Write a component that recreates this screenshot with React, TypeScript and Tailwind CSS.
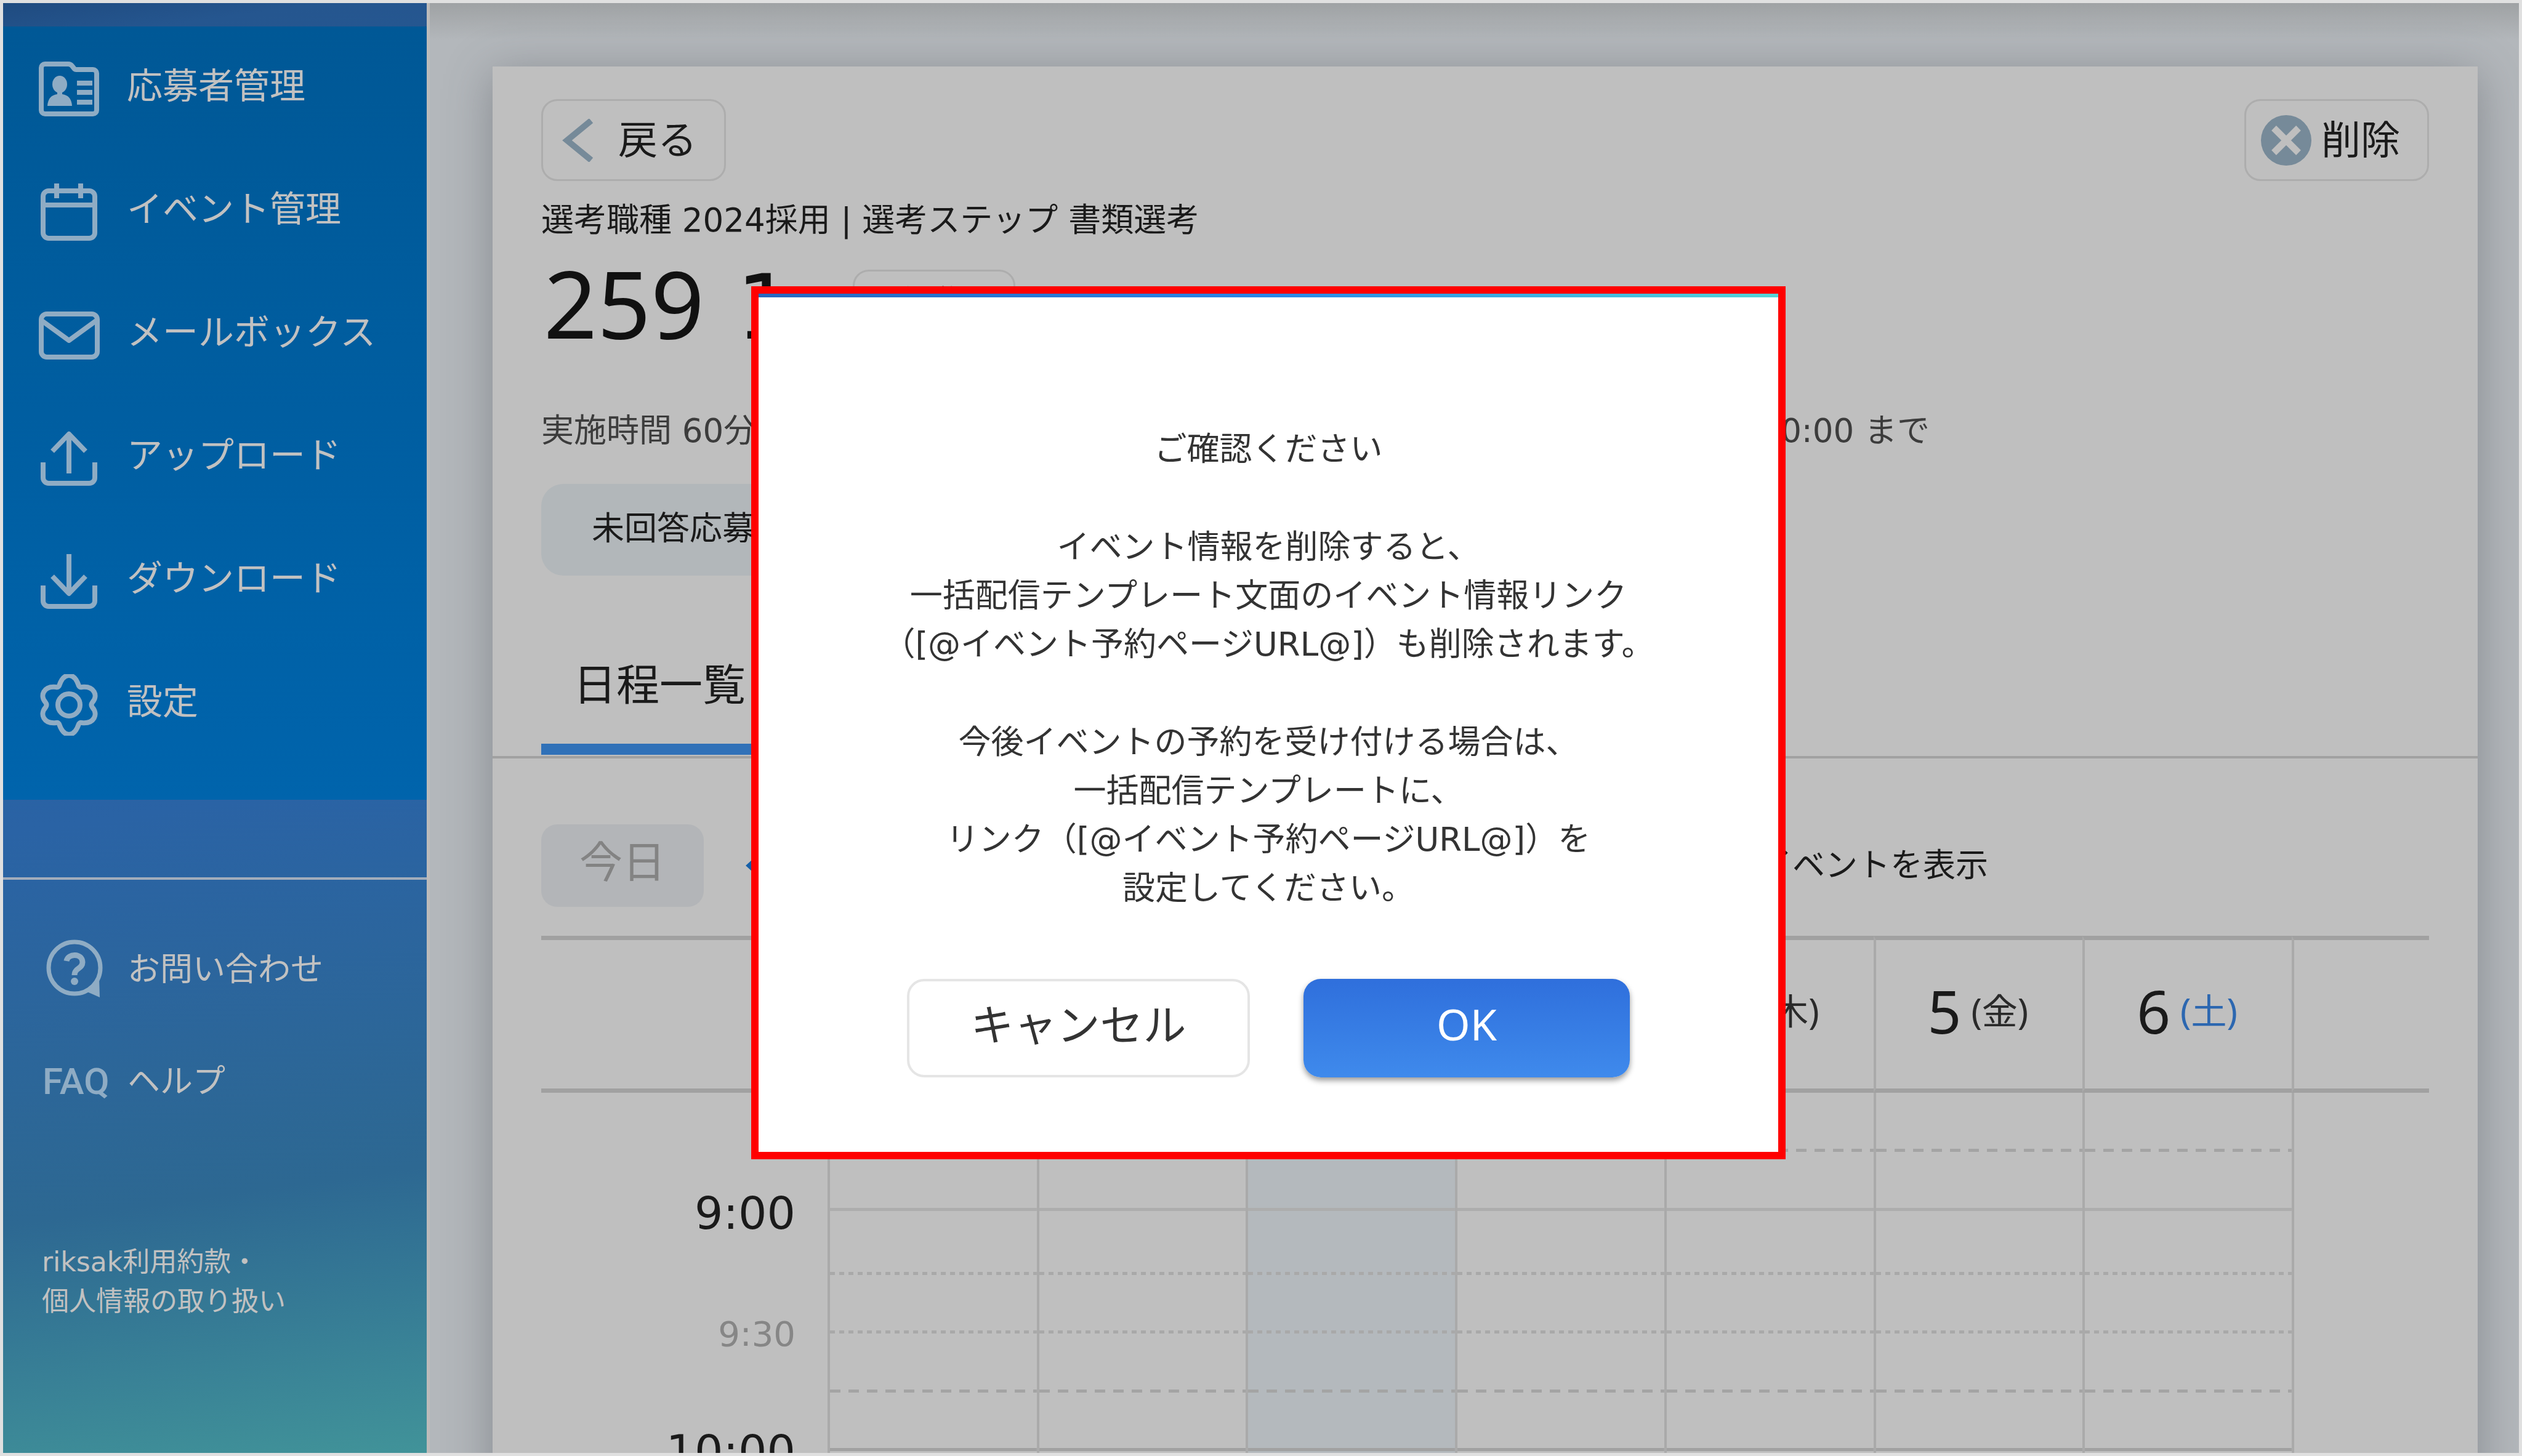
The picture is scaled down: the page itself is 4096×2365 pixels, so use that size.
import type React from "react";
import { clsx } from "clsx";

interface NavItem {
	label: string;
	icon: React.ReactNode;
}

interface Day {
	date: number;
	week: string;
	today?: boolean;
	saturday?: boolean;
}

interface Slot {
	height: string;
	line: string;
	time?: string;
	half?: boolean;
}

const ApplicantIcon = () => (
	<>
		<path d="M5 15a6 6 0 0 1 6-6h38a8 8 0 0 1 6 3l4 5a4 4 0 0 0 3 1h27a6 6 0 0 1 6 6v60a6 6 0 0 1-6 6H11a6 6 0 0 1-6-6z" />
		<path d="M63 40h25M63 55h25M63 71h25" />
		<g fill="currentColor" stroke="none">
			<ellipse cx="35" cy="42" rx="12" ry="14" />
			<path d="M31 52h8v6q15 2 16 19H15q1-17 16-19z" />
		</g>
	</>
);

const CalendarIcon = () => (
	<>
		<rect x="8" y="15" width="84" height="77" rx="9" />
		<path d="M8 38h84M30 3v24M69 3v24" />
	</>
);

const MailIcon = () => (
	<>
		<rect x="5" y="15" width="91" height="70" rx="9" />
		<path d="M6 26l44 32 44-32" />
	</>
);

const UploadIcon = () => (
	<>
		<path d="M8 56v25a9 9 0 0 0 9 9h66a9 9 0 0 0 9-9V56" />
		<path d="M50 74V12M23 38l27-28 27 28" />
	</>
);

const DownloadIcon = () => (
	<>
		<path d="M8 56v25a9 9 0 0 0 9 9h66a9 9 0 0 0 9-9V56" />
		<path d="M50 5v62M23 41l27 28 27-28" />
	</>
);

const GearIcon = () => (
	<>
		<circle cx="50" cy="50" r="18" />
		<path d="M34 19C38 7 43 2 50 2s12 5 16 17q2 3 5 2c20-2 27 14 17 25q-3 4 0 8c10 11 3 27-17 25q-3-1-5 2C62 93 57 98 50 98s-12-5-16-17q-2-3-5-2C9 81 2 65 12 54q3-4 0-8C2 35 9 19 29 21q3 1 5-2z" />
	</>
);

const NAV_ITEMS: NavItem[] = [
	{ label: "応募者管理", icon: <ApplicantIcon /> },
	{ label: "イベント管理", icon: <CalendarIcon /> },
	{ label: "メールボックス", icon: <MailIcon /> },
	{ label: "アップロード", icon: <UploadIcon /> },
	{ label: "ダウンロード", icon: <DownloadIcon /> },
	{ label: "設定", icon: <GearIcon /> },
];

const DAYS: Day[] = [
	{ date: 31, week: "日" },
	{ date: 1, week: "月" },
	{ date: 2, week: "火", today: true },
	{ date: 3, week: "水" },
	{ date: 4, week: "木" },
	{ date: 5, week: "金" },
	{ date: 6, week: "土", saturday: true },
];

const SOLID = "bg-[linear-gradient(#adadad,#adadad)]";
const HOUR = "bg-[linear-gradient(#a1a1a1,#a1a1a1)]";
const DOTTED =
	"bg-[repeating-linear-gradient(90deg,#a9a9a9_0_8px,transparent_8px_15px)]";
const DASHED =
	"bg-[repeating-linear-gradient(90deg,#a4a4a4_0_17px,transparent_17px_30px)]";

const SLOTS: Slot[] = [
	{ height: "h-[96px]", line: DASHED },
	{ height: "h-[96px]", line: SOLID, time: "9:00" },
	{ height: "h-[104px]", line: DOTTED },
	{ height: "h-[95px]", line: DOTTED, time: "9:30", half: true },
	{ height: "h-[96px]", line: DASHED },
	{ height: "h-[95px]", line: HOUR, time: "10:00" },
	{ height: "h-[96px]", line: DOTTED },
];

const Sidebar: React.FC = () => (
	<aside className="flex w-[693px] shrink-0 flex-col border-r-[5px] border-[#bdbbba] bg-[linear-gradient(172deg,#1f4b80_0%,#25568f_3%,#2a63a5_55%,#2d6892_81%,#419399_100%)] text-[#c1c1c1]">
		<nav className="mt-[38px] bg-linear-to-b from-[#005896] to-[#0064ac] pt-[2px] pb-[54px]">
			{NAV_ITEMS.map((item) => (
				<a
					key={item.label}
					href="#"
					className="flex h-[200px] items-center pl-[57px] text-[58px] leading-[80px]"
				>
					<svg
						viewBox="0 0 100 100"
						className="mr-11 size-[100px] text-[#8facc4]"
						fill="none"
						stroke="currentColor"
						strokeWidth="8"
						strokeLinecap="butt"
						strokeLinejoin="round"
					>
						{item.icon}
					</svg>
					<span className="pb-[10px]">{item.label}</span>
				</a>
			))}
		</nav>

		<div className="mt-[126px] border-t-4 border-[#a3adbb] pt-[55px] text-[53px] leading-[72px]">
			<a href="#" className="flex h-[182px] items-center pl-[66px]">
				<svg
					viewBox="0 0 100 100"
					className="mr-9 size-[100px] text-[#8facc4]"
					fill="none"
					stroke="currentColor"
					strokeWidth="7"
				>
					<circle cx="50" cy="47" r="42" />
					<path d="M66 84l24-20 1 31z" fill="currentColor" stroke="none" />
					<path d="M37 36c2-13 26-13 26 2 0 11-13 9-13 21" strokeWidth="9" />
					<circle cx="50" cy="69" r="6" fill="currentColor" stroke="none" />
				</svg>
				お問い合わせ
			</a>
			<a href="#" className="flex h-[182px] items-center pl-16">
				<span className="w-[138px] font-['Roboto',sans-serif] text-[60px] font-medium text-[#8facc4]">
					FAQ
				</span>
				ヘルプ
			</a>
			<a
				href="#"
				className="mt-[170px] block pl-[63px] text-[44px] leading-[64px]"
			>
				riksak利用約款・
				<br />
				個人情報の取り扱い
			</a>
		</div>
	</aside>
);

const WeekTable: React.FC = () => (
	<table className="mt-[47px] w-full table-fixed border-separate border-spacing-0">
		<colgroup>
			<col className="w-[465px]" />
			{DAYS.map((day) => (
				<col key={day.date} className="w-[11.08%]" />
			))}
			<col />
		</colgroup>
		<thead>
			<tr className="h-[255px]">
				<th className="border-y-7 border-[#a1a1a1]" />
				{DAYS.map((day) => (
					<th
						key={day.date}
						className={clsx(
							"border-y-7 border-l-4 border-y-[#a1a1a1] border-l-[#aaaaaa] font-normal",
							day.today && "bg-[#b4b9bd]",
						)}
					>
						<div className="flex items-center justify-center gap-4 pr-1 pb-3 font-['Noto_Sans','Noto_Sans_CJK_JP',sans-serif] leading-[120px]">
							<span className="text-[96px]">{day.date}</span>
							<span
								className={clsx(
									"text-[58px]",
									day.saturday ? "text-[#2c67b0]" : "text-[#2a2a2a]",
								)}
							>
								({day.week})
							</span>
						</div>
					</th>
				))}
				<th className="border-y-7 border-l-4 border-y-[#a1a1a1] border-l-[#aaaaaa]" />
			</tr>
		</thead>
		<tbody>
			{SLOTS.map((slot, index) => (
				<tr key={index} className={slot.height}>
					{index === 0 && <td />}
					{slot.time && (
						<td
							rowSpan={2}
							className={clsx(
								"pr-[52px] text-right align-middle leading-[90px]",
								slot.half ? "text-[56px] text-[#868686]" : "text-[73px]",
							)}
						>
							{slot.time}
						</td>
					)}
					{DAYS.map((day) => (
						<td
							key={day.date}
							className={clsx(
								"border-l-4 border-[#aaaaaa] bg-bottom bg-no-repeat bg-size-[100%_5px]",
								slot.line,
								day.today && "bg-[#b4b9bd]",
							)}
						/>
					))}
					<td className="border-l-4 border-[#aaaaaa]" />
				</tr>
			))}
		</tbody>
	</table>
);

const EventCard: React.FC = () => (
	<section className="mr-[67px] ml-[102px] mt-[103px] bg-[#bfbfbf] pt-[53px] text-[53px] leading-[80px] text-[#1a1a1a] shadow-[0_12px_70px_rgba(80,85,90,0.45)]">
		<div className="px-[79px]">
			<div className="flex justify-between text-[64px]">
				<button className="flex h-[133px] w-[300px] items-center rounded-[26px] border-3 border-[#adadad] pl-[30px]">
					<svg
						viewBox="0 0 52 70"
						className="mr-10 h-[70px] w-[52px]"
						fill="none"
						stroke="#768a99"
						strokeWidth="10"
					>
						<path d="M48 3L9 35l39 32" />
					</svg>
					戻る
				</button>
				<button className="flex h-[133px] w-[300px] items-center rounded-[26px] border-3 border-[#adadad] pl-6">
					<svg viewBox="0 0 82 82" className="mr-4 size-[82px]">
						<circle cx="41" cy="41" r="41" fill="#768a99" />
						<path
							d="M21 21l40 40M61 21L21 61"
							stroke="#bfbfbf"
							strokeWidth="11"
						/>
					</svg>
					削除
				</button>
			</div>

			<p className="mt-6">選考職種 2024採用 | 選考ステップ 書類選考</p>
			<div className="mt-[19px] flex items-center pl-1">
				<h1 className="font-['Noto_Sans',sans-serif] text-[152px] leading-[150px] text-[#111111]">
					259
					<span className="ml-[52px] font-['DejaVu_Sans',sans-serif] text-[146px] leading-[100px]">
						1
					</span>
				</h1>
				<button className="ml-24 h-[108px] w-[264px] rounded-[26px] border-3 border-[#adadad]">
					編集
				</button>
			</div>

			<div className="mt-[93px] flex text-[#3c3c3c]">
				<span>実施時間 60分</span>
				<span className="ml-auto mr-[811px]">00:00 まで</span>
			</div>
			<div className="mt-[46px] flex">
				<span className="flex h-[149px] items-center rounded-[36px] bg-[#b2b7ba] px-[82px] pb-1">
					未回答応募者
				</span>
			</div>
		</div>

		<div className="mt-[139px] flex border-b-4 border-[#a1a1a1] px-[79px] pb-[2px] text-[70px]">
			<button className="border-b-18 border-[#3071b8] px-[52px] pb-[54px]">
				日程一覧
			</button>
		</div>

		<div className="px-[79px] pt-[107px]">
			<div className="flex items-center">
				<button className="h-[134px] w-[264px] rounded-[26px] bg-[#b3b5b8] pb-2 text-[70px] text-[#838383]">
					今日
				</button>
				<button aria-label="前の週" className="ml-[68px]">
					<svg
						viewBox="0 0 44 64"
						className="h-16 w-11"
						fill="none"
						stroke="#1560a8"
						strokeWidth="12"
					>
						<path d="M40 4L9 32l31 28" />
					</svg>
				</button>
				<label className="ml-auto mr-[716px] flex items-center gap-5">
					<input type="checkbox" className="size-12" />
					他のイベントを表示
				</label>
			</div>
			<WeekTable />
		</div>
	</section>
);

const ConfirmDialog: React.FC = () => (
	<div className="absolute inset-0 flex items-center justify-center pb-[18px] pl-6">
		<div
			role="dialog"
			aria-modal="true"
			className="flex w-[41.35%] flex-col items-center border-12 border-[#ff0000] bg-white pb-[121px] text-center text-[53px] leading-[79px] text-[#333333]"
		>
			<div className="h-[6px] w-full bg-linear-to-r from-[#2668c0] via-[#2a86e6] to-[#55d4d6]" />
			<h2 className="mt-[207px]">ご確認ください</h2>
			<p className="mt-20">
				イベント情報を削除すると、
				<br />
				一括配信テンプレート文面のイベント情報リンク
				<br />
				（[@イベント予約ページURL@]）も削除されます。
			</p>
			<p className="mt-20">
				今後イベントの予約を受け付ける場合は、
				<br />
				一括配信テンプレートに、
				<br />
				リンク（[@イベント予約ページURL@]）を
				<br />
				設定してください。
			</p>
			<div className="mt-[108px] flex gap-[87px] text-[70px]">
				<button className="h-[160px] w-[557px] rounded-[28px] border-4 border-[#e5e5e5] pb-1">
					キャンセル
				</button>
				<button className="h-[160px] w-[530px] rounded-[28px] bg-linear-to-b from-[#2f6fdc] to-[#3f8aec] pb-3 font-['Noto_Sans',sans-serif] text-white shadow-[0_5px_10px_rgba(0,0,0,0.4)]">
					OK
				</button>
			</div>
		</div>
	</div>
);

const App: React.FC = () => (
	<div className="relative flex h-screen overflow-hidden border-5 border-[#e0e0e0] font-['DejaVu_Sans','Noto_Sans_CJK_JP',sans-serif]">
		<Sidebar />
		<main className="min-w-0 flex-1 overflow-hidden bg-[linear-gradient(#9fa2a4,#b3b7bb_60px)]">
			<EventCard />
		</main>
		<ConfirmDialog />
	</div>
);

export default App;
